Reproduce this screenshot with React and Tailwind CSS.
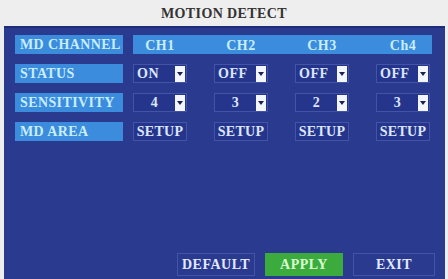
import React from 'react';

const font = { fontFamily: '"Liberation Serif", "DejaVu Serif", serif' };

const channels = ['CH1', 'CH2', 'CH3', 'Ch4'];
const status = ['ON', 'OFF', 'OFF', 'OFF'];
const sensitivity = ['4', '3', '2', '3'];

function Label({ children }) {
  return (
    <div className="flex h-[19px] w-[108px] items-center bg-[#3b8cdc] pl-[5px] text-[14px] font-bold tracking-[0.4px] text-[#c8eeff]">
      {children}
    </div>
  );
}

function Dropdown({ value, center }) {
  return (
    <div className="flex h-[19px] w-[54px] items-center border border-[#4353a6] bg-[#26358c] pr-[1px]">
      <span className={`flex-1 text-[14px] font-bold tracking-[0.5px] text-[#dce6ff] ${center ? 'text-center' : 'pl-[3px]'}`}>{value}</span>
      <span className="flex h-[16px] w-[10px] items-center justify-center bg-[#f4f6ff]">
        <svg width="6" height="4" viewBox="0 0 6 4">
          <path d="M0 0 H6 L3 4 Z" fill="#1a2050" />
        </svg>
      </span>
    </div>
  );
}

function Setup() {
  return (
    <div className="flex h-[19px] w-[54px] items-center justify-center border border-[#4353a6] bg-[#26358c] text-[14px] font-bold tracking-[0.3px] text-[#dce6ff]">
      SETUP
    </div>
  );
}

export default function App() {
  return (
    <div className="flex h-[279px] w-[448px] flex-col overflow-hidden bg-[#eeeeee]" style={font}>
      <div className="flex h-[26px] items-center justify-center text-[14px] font-bold tracking-[0.4px] text-[#333333]">
        MOTION DETECT
      </div>
      <div className="ml-[4px] mr-[3px] flex flex-1 flex-col border-t-2 border-[#1f2c7a] bg-[#2a3a8e] pl-[11px] pt-[7px]">
        <div className="flex flex-col gap-[10px]">
          <div className="flex gap-[10px]">
            <Label>MD CHANNEL</Label>
            <div className="grid h-[19px] w-[299px] grid-cols-[54px_54px_54px_54px] items-center gap-x-[27px] bg-[#3b8cdc] text-[14px] font-bold tracking-[0.5px] text-[#c8eeff]">
              {channels.map((c) => (
                <span key={c} className="text-center">{c}</span>
              ))}
            </div>
          </div>
          <div className="flex gap-[10px]">
            <Label>STATUS</Label>
            <div className="flex gap-[27px]">
              {status.map((v, i) => (
                <Dropdown key={i} value={v} />
              ))}
            </div>
          </div>
          <div className="flex gap-[10px]">
            <Label>SENSITIVITY</Label>
            <div className="flex gap-[27px]">
              {sensitivity.map((v, i) => (
                <Dropdown key={i} value={v} center />
              ))}
            </div>
          </div>
          <div className="flex gap-[10px]">
            <Label>MD AREA</Label>
            <div className="flex gap-[27px]">
              {channels.map((c) => (
                <Setup key={c} />
              ))}
            </div>
          </div>
        </div>
        <div className="mt-auto mb-[3px] flex gap-[10px] pl-[162px]">
          <div className="flex h-[23px] w-[78px] items-center justify-center border border-[#4353a6] text-[14px] font-bold tracking-[0.5px] text-[#e2e8ff]">
            DEFAULT
          </div>
          <div className="flex h-[23px] w-[78px] items-center justify-center bg-[#3cab3e] text-[14px] font-bold tracking-[0.5px] text-[#d8ffcc]">
            APPLY
          </div>
          <div className="flex h-[23px] w-[82px] items-center justify-center border border-[#4353a6] text-[14px] font-bold tracking-[0.5px] text-[#e2e8ff]">
            EXIT
          </div>
        </div>
      </div>
    </div>
  );
}
